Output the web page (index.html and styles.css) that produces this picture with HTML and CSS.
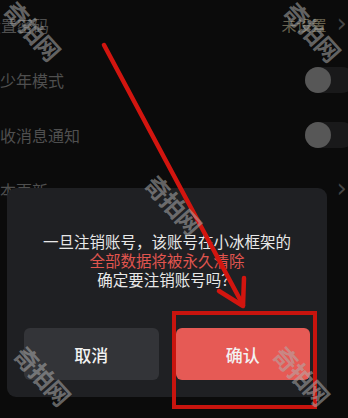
FILE: index.html
```html
<!DOCTYPE html>
<html lang="zh">
<head>
<meta charset="utf-8">
<link rel="stylesheet" href="styles.css">
</head>
<body>
<div class="screen">
  <div class="list">
    <div class="row">
      <span class="label">设置密码</span>
      <span class="right"><span class="value">未设置</span><span class="chev">›</span></span>
    </div>
    <div class="row">
      <span class="label">青少年模式</span>
      <span class="toggle"><span class="knob"></span></span>
    </div>
    <div class="row">
      <span class="label">接收消息通知</span>
      <span class="toggle"><span class="knob"></span></span>
    </div>
    <div class="row">
      <span class="label">版本更新</span>
      <span class="right"><span class="chev">›</span></span>
    </div>
  </div>

  <div class="dialog">
    <div class="msg">
      <p>一旦注销账号，该账号在小冰框架的</p>
      <p class="warn">全部数据将被永久清除</p>
      <p>确定要注销账号吗？</p>
    </div>
    <div class="buttons">
      <div class="btn cancel">取消</div>
      <div class="btn ok">确认</div>
    </div>
  </div>

  <div class="highlight"></div>

  <svg class="arrow" width="348" height="418" viewBox="0 0 348 418">
    <line x1="104" y1="45" x2="243" y2="305" stroke="#d2150f" stroke-width="4.5" stroke-linecap="round"/>
    <polyline points="219,291 243,306 244,278" fill="none" stroke="#d2150f" stroke-width="4.5" stroke-linecap="round" stroke-linejoin="round"/>
  </svg>

  <span class="wm wm-tl">奇拍网</span>
  <span class="wm wm-tr">奇拍网</span>
  <span class="wm wm-c">奇拍网</span>
  <span class="wm wm-bl">奇拍网</span>
  <span class="wm wm-br">奇拍网</span>
</div>
</body>
</html>
```
FILE: styles.css
```css
html, body {
  margin: 0;
  padding: 0;
  background: #0b0b0b;
}
body {
  width: 348px;
  height: 418px;
  overflow: hidden;
  font-family: "Noto Sans CJK SC", "Noto Sans", sans-serif;
}
.screen {
  position: relative;
  width: 348px;
  height: 418px;
  overflow: hidden;
  background: #0b0b0b;
}
.list {
  margin-top: -3px;
}
.row {
  height: 55px;
  display: flex;
  align-items: center;
  justify-content: space-between;
}
.label {
  font-size: 16px;
  color: #4f4f4f;
  margin-left: -15px;
  white-space: nowrap;
}
.row:nth-child(2) .label { margin-left: -16px; }
.row:nth-child(3) .label { margin-left: -16px; }
.row:nth-child(4) .label { margin-left: -16px; }
.right {
  display: flex;
  align-items: center;
  gap: 10px;
  margin-right: 1px;
}
.value {
  font-size: 15px;
  color: #67624f;
}
.chev {
  font-size: 26px;
  line-height: 1;
  color: #454545;
  font-family: "DejaVu Sans", sans-serif;
  margin-top: -4px;
}
.toggle {
  width: 50px;
  height: 26px;
  border-radius: 13px;
  background: #19191a;
  margin-right: -7px;
  display: flex;
  align-items: center;
}
.knob {
  width: 26px;
  height: 26px;
  border-radius: 50%;
  background: #575757;
}
.dialog {
  position: absolute;
  left: 7px;
  top: 188px;
  width: 320px;
  height: 209px;
  background: #1f2023;
  border-radius: 9px;
  box-sizing: border-box;
  padding: 44px 17px 17px;
  display: flex;
  flex-direction: column;
  justify-content: space-between;
}
.msg p {
  margin: 0;
  text-align: center;
  font-size: 15.5px;
  line-height: 19px;
  color: #e8e8e8;
}
.msg .warn {
  color: #e0554f;
}
.buttons {
  display: flex;
  gap: 17px;
}
.btn {
  flex: 1;
  height: 52px;
  border-radius: 6px;
  display: flex;
  align-items: center;
  justify-content: center;
  font-size: 17px;
  font-weight: 500;
  color: #f2f2f2;
}
.cancel {
  background: #333438;
}
.ok {
  background: #e65a55;
}
.highlight {
  position: absolute;
  left: 172px;
  top: 311px;
  width: 145px;
  height: 98px;
  box-sizing: border-box;
  border: 4px solid #c8140e;
}
.arrow {
  position: absolute;
  left: 0;
  top: 0;
}
.wm {
  position: absolute;
  font-size: 24px;
  font-weight: 700;
  color: rgba(175, 175, 175, 0.55);
  white-space: nowrap;
  transform: translate(-50%, -50%) rotate(48deg);
  letter-spacing: -1px;
}
.wm-tl { left: 33px; top: 30px; }
.wm-tr { left: 313px; top: 31px; }
.wm-c { left: 174px; top: 204px; }
.wm-bl { left: 43px; top: 375px; }
.wm-br { left: 302px; top: 375px; }
```
